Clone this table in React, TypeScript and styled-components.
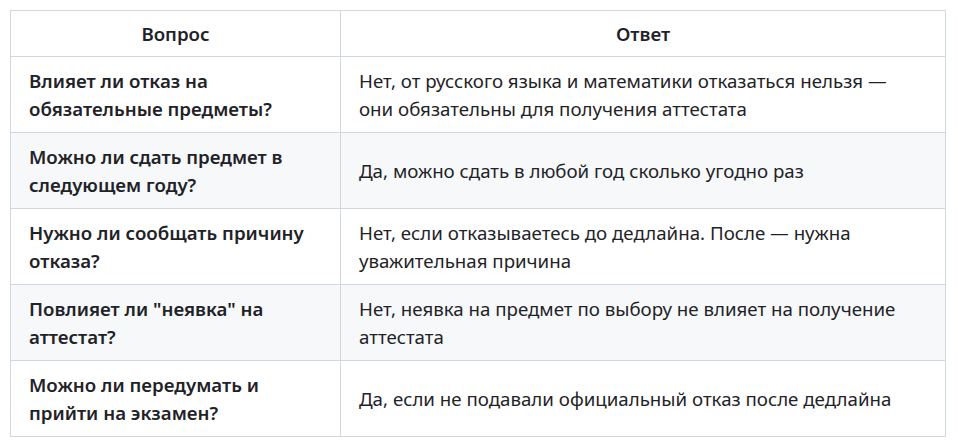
import styled, { createGlobalStyle } from "styled-components";

const GlobalStyle = createGlobalStyle`
  body {
    margin: 0;
    background: #ffffff;
    font-family: "Noto Sans", "Open Sans", sans-serif;
    color: #1f2328;
  }
`;

const rows = [
  {
    q: "Влияет ли отказ на обязательные предметы?",
    a: "Нет, от русского языка и математики отказаться нельзя — они обязательны для получения аттестата",
  },
  {
    q: "Можно ли сдать предмет в следующем году?",
    a: "Да, можно сдать в любой год сколько угодно раз",
  },
  {
    q: "Нужно ли сообщать причину отказа?",
    a: "Нет, если отказываетесь до дедлайна. После — нужна уважительная причина",
  },
  {
    q: "Повлияет ли \"неявка\" на аттестат?",
    a: "Нет, неявка на предмет по выбору не влияет на получение аттестата",
  },
  {
    q: "Можно ли передумать и прийти на экзамен?",
    a: "Да, если не подавали официальный отказ после дедлайна",
  },
];

export default function App() {
  return (
    <>
      <GlobalStyle />
      <Wrapper>
        <Table>
          <colgroup>
            <col style={{ width: 330 }} />
            <col />
          </colgroup>
          <thead>
            <tr>
              <HeadCell>Вопрос</HeadCell>
              <HeadCell>Ответ</HeadCell>
            </tr>
          </thead>
          <tbody>
            {rows.map((row, i) => (
              <Row key={i} $striped={i % 2 === 1}>
                <Cell $bold>{row.q}</Cell>
                <Cell>{row.a}</Cell>
              </Row>
            ))}
          </tbody>
        </Table>
      </Wrapper>
    </>
  );
}

const Wrapper = styled.div`
  padding: 10px;
`;

const Table = styled.table`
  width: 936px;
  border-collapse: collapse;
  table-layout: fixed;
  font-size: 18.7px;
  line-height: 28px;
`;

const HeadCell = styled.th`
  padding: 8.5px 18px;
  border: 1px solid #d1d9e0;
  font-weight: 600;
  text-align: center;
  background: #ffffff;
`;

const Row = styled.tr<{ $striped: boolean }>`
  background: ${(p) => (p.$striped ? "#f6f8fa" : "#ffffff")};
`;

const Cell = styled.td<{ $bold?: boolean }>`
  padding: 9.5px 24px 9.5px 18px;
  border: 1px solid #d1d9e0;
  font-weight: ${(p) => (p.$bold ? 600 : 400)};
  text-align: left;
  vertical-align: middle;
`;
